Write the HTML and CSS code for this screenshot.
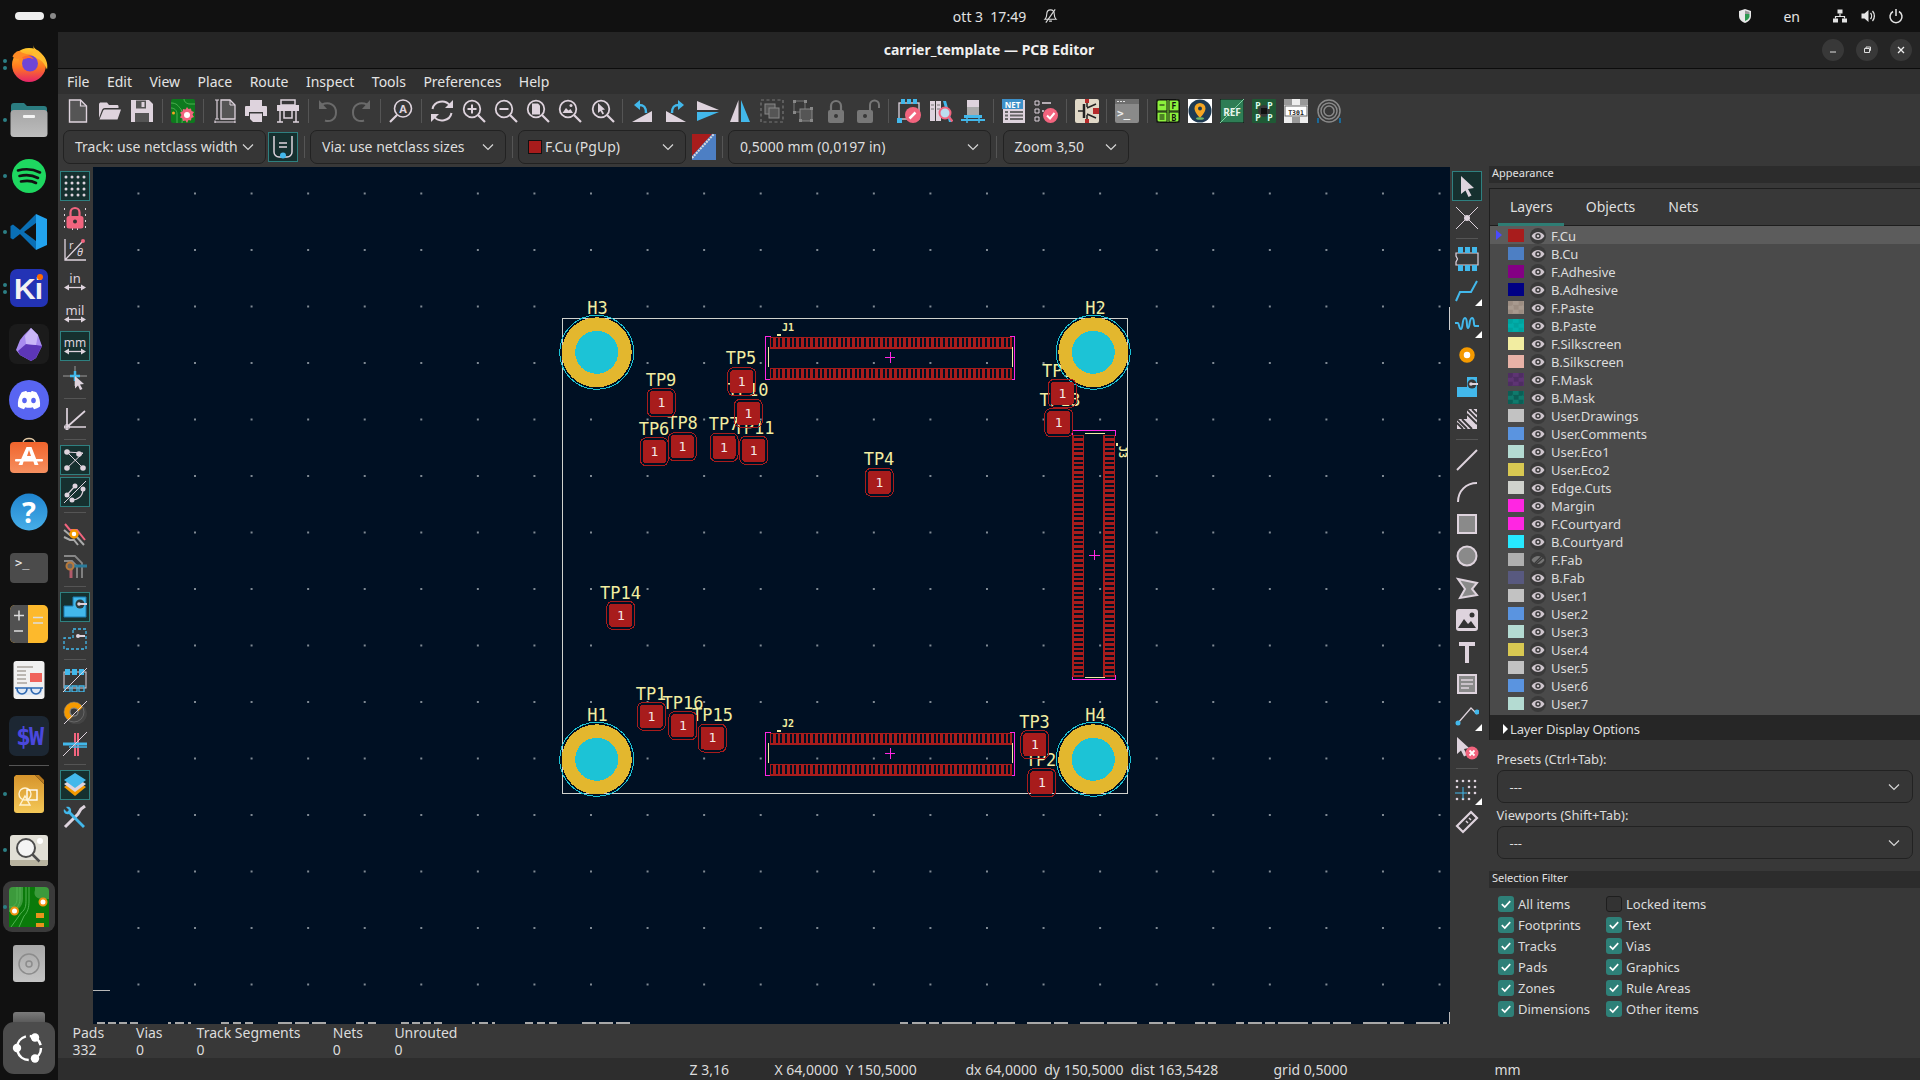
FILE: index.html
```html
<!DOCTYPE html>
<html lang="it">
<head>
<meta charset="utf-8">
<title>carrier_template — PCB Editor</title>
<link rel="stylesheet" href="styles.css">
</head>
<body>
<svg class="defs" width="0" height="0" aria-hidden="true">
  <defs>
    <linearGradient id="gFox" x1="0" y1="0" x2="0" y2="1"><stop offset="0" stop-color="#ffcb2e"/><stop offset=".55" stop-color="#ff7a1f"/><stop offset="1" stop-color="#e5246a"/></linearGradient>
    <linearGradient id="gFiles" x1="0" y1="0" x2="0" y2="1"><stop offset="0" stop-color="#a5a5a5"/><stop offset="1" stop-color="#bdbdbd"/></linearGradient>
    <linearGradient id="gShop" x1="0" y1="0" x2="0" y2="1"><stop offset="0" stop-color="#f0642c"/><stop offset="1" stop-color="#f69060"/></linearGradient>
    <linearGradient id="gHelp" x1="0" y1="0" x2="0" y2="1"><stop offset="0" stop-color="#1f84cf"/><stop offset="1" stop-color="#47aee8"/></linearGradient>
    <linearGradient id="gDraw" x1="0" y1="0" x2="0" y2="1"><stop offset="0" stop-color="#d6942c"/><stop offset="1" stop-color="#f4c857"/></linearGradient>
    <linearGradient id="gDisc" x1="0" y1="0" x2="0" y2="1"><stop offset="0" stop-color="#a8a8a8"/><stop offset="1" stop-color="#c4c4c4"/></linearGradient>
    <linearGradient id="gFade" x1="0" y1="0" x2="0" y2="1"><stop offset="0" stop-color="#7b7b7b"/><stop offset="1" stop-color="#222"/></linearGradient>
    <symbol id="chev" viewBox="0 0 12 8"><path d="M1 1.500l5 5 5-5" fill="none" stroke="#d6d6d6" stroke-width="1.200"/></symbol>
    <symbol id="eye" viewBox="0 0 16 16"><path d="M1.500 8C3.500 5 5.700 4 8 4s4.500 1 6.500 4c-2 3-4.200 4-6.500 4S3.500 11 1.500 8z" fill="#cfc6ce"/><circle cx="8" cy="8" r="2.700" fill="#3a3a3a"/><circle cx="8" cy="8" r="1.300" fill="#cfc6ce"/></symbol>
    <symbol id="eyeoff" viewBox="0 0 16 16"><path d="M1.500 8C3.500 5 5.700 4 8 4s4.500 1 6.500 4c-2 3-4.200 4-6.500 4S3.500 11 1.500 8z" fill="#777"/><path d="M3 13L13 3M5 13L14 5" stroke="#3a3a3a" stroke-width="1.300"/></symbol>
    <symbol id="chk" viewBox="0 0 16 16"><path d="M3.800 8.200l3 2.800 5.400-5.800" fill="none" stroke="#fff" stroke-width="1.700"/></symbol>
    <symbol id="mag" viewBox="0 0 24 24"><circle cx="10" cy="10" r="8.300" fill="none" stroke="#ded3dd" stroke-width="1.800"/><path d="M16 16l7 7" stroke="#ded3dd" stroke-width="2.200"/></symbol>
    <g id="pad"><rect x="-14" y="-14" width="28" height="28" rx="6" fill="none" stroke="#a81c1c"/><rect x="-11.500" y="-11.500" width="23" height="23" rx="3" fill="#a81c1c"/></g>
    <g id="conn">
      <path d="M771 336.500H765.500V379.500H771M1010 336.500H1014.500V379.500H1010" fill="none" stroke="#ff26e2"/>
      <path d="M768.500 347v20M1012.500 347v20" stroke="#f2eda1"/>
      <rect x="769.500" y="336.500" width="242" height="12" fill="#a81c1c"/>
      <rect x="769.500" y="367.500" width="242" height="12" fill="#a81c1c"/>
      <path d="M771 342.500H1010M771 373.500H1010" stroke="#001023" stroke-width="9" stroke-dasharray="2 2.650"/>
      <path d="M885 357.500h10M890 352v11" stroke="#ff26e2"/>
    </g>
  </defs>
</svg>

<header class="topbar">
  <div class="top-left"><span class="pill"></span><span class="pilldot"></span></div>
  <div class="clock">
    <span>ott 3&nbsp;&nbsp;17:49</span>
    <svg class="bell" viewBox="0 0 16 16"><path d="M8 1.500c-2.800 0-4 2-4 4.500 0 3-1 4.500-2 5.500h12c-1-1-2-2.500-2-5.500 0-2.500-1.200-4.500-4-4.500zM6.500 13.500h3" fill="none" stroke="#ddd" stroke-width="1.200"/><path d="M3 15L13 1" stroke="#ddd" stroke-width="1.200"/></svg>
  </div>
  <div class="top-right">
    <svg class="tray shield" viewBox="0 0 16 16"><path d="M8 1l6 2v5c0 3.500-3 6-6 7-3-1-6-3.500-6-7V3z" fill="#e8e8e8"/><path d="M8 6l4.500 0v3c-.6 2-2.500 3.300-4.500 4z" fill="#2d9a50"/><path d="M8 2.500l4.500 1.500v2H8z" fill="#9a9a9a"/></svg>
    <span class="tray en">en</span>
    <svg class="tray" viewBox="0 0 16 16"><path d="M5.500 1.500h5v4h-5zM1 10.500h5v4H1zM10 10.500h5v4h-5z" fill="#e4e4e4"/><path d="M8 5.500v3M3.500 10.500v-2h9v2" fill="none" stroke="#e4e4e4" stroke-width="1.200"/></svg>
    <svg class="tray" viewBox="0 0 16 16"><path d="M1.500 5.500h3L8.500 2v12l-4-3.500h-3z" fill="#e4e4e4"/><path d="M10.500 5c1.400 1.600 1.400 4.400 0 6M12.500 3c2.500 2.800 2.500 7.200 0 10" fill="none" stroke="#e4e4e4" stroke-width="1.300"/></svg>
    <svg class="tray" viewBox="0 0 16 16"><path d="M5 3.500a6 6 0 1 0 6 0" fill="none" stroke="#e4e4e4" stroke-width="1.500"/><path d="M8 1v7" stroke="#e4e4e4" stroke-width="1.500"/></svg>
  </div>
</header>

<div class="main">
  <nav class="dock">
    <div class="dk run2"><svg viewBox="0 1.500 40 40"><circle cx="20" cy="22.500" r="17" fill="url(#gFox)"/><path d="M24 2c1 5 5 6 10 11 4 4 5 10 4 14C34 17 30 17 22 13 25 10 25 6 24 2z" fill="#ffbd2e"/><path d="M3.500 14c3-6 7-6 8-5 3 3 8 2 12 4 3 2 3 7-1 10-4 3-10 2-12-2-1-2-1-3 0-5-3 1-5 0-7-2z" fill="#ff8a24"/><circle cx="21" cy="21" r="8" fill="#6f45d6"/><path d="M13 15c4-3 10-2 12 2-3-2-7-2-10 0z" fill="#ff6a2d"/></svg></div>
    <div class="dk run"><svg viewBox="0 0 40 40"><path d="M2 6c0-2 1-3 3-3h10l3 3h17c2 0 3 1 3 3v6H2z" fill="#2b7c80"/><rect x="1.500" y="10" width="37" height="27" rx="3.500" fill="url(#gFiles)"/><rect x="14" y="15" width="12" height="3" rx="1" fill="#f4f4f4"/></svg></div>
    <div class="dk run"><svg viewBox="0 0 40 40"><circle cx="20" cy="20" r="17" fill="#1ed760"/><path d="M9 14.500c7-2 15-1.500 22 2M10.500 20c6-1.500 13-1 18.500 2M12 25.500c5-1 11-.8 15 1.500" fill="none" stroke="#111" stroke-width="2.600" stroke-linecap="round"/></svg></div>
    <div class="dk run"><svg viewBox="0 0 40 40"><path d="M27 2L11 18 4 12.500 1.500 14v12L4 27.500 11 22l16 16z" fill="#0a6fb5"/><path d="M27 2l11 5v26l-11 5z" fill="#22a3ee"/><path d="M27 11L15 20l12 9z" fill="#111"/></svg></div>
    <div class="dk run2"><svg viewBox="0 0 40 40"><rect x="1" y="1" width="38" height="38" rx="7" fill="#2333b5"/><text x="19" y="31" class="ki">Ki</text><circle cx="31" cy="9" r="3" fill="#ff6a00"/></svg></div>
    <div class="dk"><svg viewBox="0 0 40 40"><rect width="40" height="40" rx="8" fill="#1b1b1b"/><path d="M22 4l7 7 4 11-6 12-5 3-11-6-4-5 4-10 4-5z" fill="#a88bf0"/><path d="M9 27l8-7 10 1 6 1-6 12-5 3-11-6z" fill="#5d36b8"/><path d="M16 12l6-8 7 7-2 10-10-1z" fill="#c9b6f7"/></svg></div>
    <div class="dk"><svg viewBox="0 0 40 40"><circle cx="20" cy="20" r="20" fill="#5865f2"/><path d="M12.500 12.500c2-1 4-1.500 5-1.500l.5 1.200c1.400-.2 2.700-.2 4 0L22.500 11c1 0 3 .5 5 1.500 3 4.500 4 9 3.500 14-2 1.500-4 2.300-6 2.700l-1.200-2c-2.500.7-5 .7-7.600 0l-1.200 2c-2-.4-4-1.200-6-2.700-.5-5 .5-9.500 3.500-14z" fill="#fff"/><ellipse cx="15.500" cy="20.500" rx="2.300" ry="2.700" fill="#5865f2"/><ellipse cx="24.500" cy="20.500" rx="2.300" ry="2.700" fill="#5865f2"/></svg></div>
    <div class="dk"><svg viewBox="0 0 40 40"><path d="M14 7c0-6 12-6 12 0" fill="none" stroke="#e3c9a5" stroke-width="1.400"/><rect x="1" y="6" width="38" height="31" rx="4" fill="url(#gShop)"/><path d="M17.500 11h5l7 18h-4l-1.500-5h-9L13.500 29h-4zM18 20h4l-2-6z" fill="#fff"/><rect x="6" y="23" width="28" height="2.500" rx="1" fill="#fff"/></svg></div>
    <div class="dk"><svg viewBox="0 0 40 40"><circle cx="20" cy="20" r="18.500" fill="url(#gHelp)"/><text x="20" y="31" class="qm">?</text></svg></div>
    <div class="dk"><svg viewBox="0 0 40 40"><rect x="1" y="5" width="38" height="30" rx="4" fill="#4b4b4b"/><text x="6" y="19" class="tm">&gt;_</text></svg></div>
    <div class="dk"><svg viewBox="0 0 40 40"><rect x="1" y="1" width="38" height="38" rx="5" fill="#fdb92c"/><path d="M6 1h13v38H6a5 5 0 0 1-5-5V6a5 5 0 0 1 5-5z" fill="#515151"/><path d="M5 11.500h10M10 6.500v10M5 27h9M24 13.500h10M24 19h10" stroke="#ddd" stroke-width="1.500"/></svg></div>
    <div class="dk"><svg viewBox="0 0 40 40"><rect x="4.500" y="1" width="31" height="38" rx="3" fill="#f1f1f1"/><path d="M8 7h16M8 11h9M8 15h9M8 19h9M8 23h10" stroke="#a9a49d" stroke-width="1.500"/><rect x="21" y="13" width="12" height="9" fill="#f0635b"/><path d="M7 27h26v8H7z" fill="#dfe8f4"/><path d="M6 28h28M8 28c0 8 10 8 10 0M22 28c0 8 10 8 10 0" fill="none" stroke="#2f69b1" stroke-width="1.700"/></svg></div>
    <div class="dk"><svg viewBox="0 0 40 40"><rect width="40" height="40" rx="7" fill="#1c2733"/><text x="20" y="29" class="sw-t">$W</text></svg></div>
    <div class="dsep"></div>
    <div class="dk run"><svg viewBox="0 0 40 40"><path d="M7 1h19l9 9v26a3 3 0 0 1-3 3H8a3 3 0 0 1-3-3V3z" fill="url(#gDraw)"/><path d="M26 1h4l5 5v4z" fill="#b5771d"/><circle cx="16" cy="20" r="6" fill="none" stroke="#fff2d0" stroke-width="1.400"/><rect x="18" y="16" width="10" height="10" fill="none" stroke="#fff" stroke-width="1.400"/><path d="M16 22l5 9H11z" fill="none" stroke="#fff2d0" stroke-width="1.400"/></svg></div>
    <div class="dk run"><svg viewBox="0 0 40 40"><rect x="1" y="5" width="38" height="31" rx="3" fill="#e1dfd6"/><path d="M1 30h38v3a3 3 0 0 1-3 3H4a3 3 0 0 1-3-3z" fill="#b8b39f"/><circle cx="17" cy="18" r="9" fill="#f5f5f5" stroke="#4d4d4d" stroke-width="2"/><path d="M23.500 24.500l7 7" stroke="#4d4d4d" stroke-width="2.500"/><circle cx="31" cy="11" r="3" fill="#fff"/></svg></div>
    <div class="dk active run"><svg viewBox="0 0 40 40"><rect width="40" height="40" rx="4" fill="#3c9a3c"/><path d="M0 40V25C7 25 14 20 14 12V0h12v3c-2 6 2 9 8 9h6v28z" fill="#0a7a0a"/><path d="M8 0v12c0 5-3 8-8 8M11 0v12c0 7-5 12-11 12M17 0v12c0 6 0 10-5 14L2 40M20 0v14c0 6-1 11-5 15l-5 11" fill="none" stroke="#50b050" stroke-width="1"/><rect x="27" y="26" width="8" height="5" fill="#e8931c"/><rect x="27" y="36" width="8" height="4" fill="#e8931c"/><circle cx="34" cy="15" r="3.500" fill="#fff" stroke="#f09312" stroke-width="2"/><circle cx="5.500" cy="24" r="3.500" fill="#fff" stroke="#f09312" stroke-width="2"/></svg></div>
    <div class="dk"><svg viewBox="0 0 40 40"><rect x="4" y="1" width="32" height="37" rx="3" fill="url(#gDisc)"/><circle cx="20" cy="20" r="10" fill="none" stroke="#8c8c8c" stroke-width="1.500"/><circle cx="20" cy="20" r="3" fill="none" stroke="#8c8c8c" stroke-width="1.500"/></svg></div>
    <div class="dk"><svg viewBox="0 0 40 40"><rect x="4" y="12" width="32" height="28" rx="3" fill="url(#gFade)"/></svg></div>
    <div class="ubuntu"><svg viewBox="0 0 40 40"><circle cx="20" cy="20" r="12" fill="none" stroke="#fff" stroke-width="2.500" stroke-dasharray="15 4"/><circle cx="8" cy="20" r="4.200" fill="#fff"/><circle cx="26" cy="9.500" r="4.200" fill="#fff"/><circle cx="26" cy="30.500" r="4.200" fill="#fff"/></svg></div>
  </nav>

  <div class="window">
    <div class="titlebar">
      <span class="title">carrier_template — PCB Editor</span>
      <div class="winbtns">
        <span class="wb"><svg viewBox="0 0 12 12"><path d="M3 8h6" stroke="#ddd" stroke-width="1"/></svg></span>
        <span class="wb"><svg viewBox="0 0 12 12"><path d="M3.500 4.500h5v4h-5zM5 4.500V3h4.500v3.500H8.500" fill="none" stroke="#ddd"/></svg></span>
        <span class="wb"><svg viewBox="0 0 12 12"><path d="M3 3l6 6M9 3l-6 6" stroke="#eee" stroke-width="1.300"/></svg></span>
      </div>
    </div>
    <div class="menubar"><span>File</span><span>Edit</span><span>View</span><span>Place</span><span>Route</span><span>Inspect</span><span>Tools</span><span>Preferences</span><span>Help</span></div>

    <div class="toolbar">
      <span class="tb"><svg class="ic" viewBox="0 0 24 24"><path d="M3.500 1h11l6 6v16h-17z" fill="#555" stroke="#ded3dd" stroke-width="1.400"/><path d="M14.500 1v6h6" fill="none" stroke="#ded3dd" stroke-width="1.200"/></svg></span>
      <span class="tb"><svg class="ic" viewBox="0 0 24 24"><path d="M1 5.500C1 4 2 3.500 3 3.500h6l2 2.500h8c1 0 1.500.5 1.500 1.500V9H7c-1.500 0-2.500.8-3 2l-3 8z" fill="#ded3dd"/><path d="M7 10.500h16l-3.500 10H1.500l3.500-8.500c.4-1 1-1.500 2-1.500z" fill="#ded3dd"/></svg></span>
      <span class="tb"><svg class="ic" viewBox="0 0 24 24"><path d="M1 1h18l4 4v18H1z" fill="#ded3dd"/><rect x="6" y="1.500" width="10" height="8" fill="#545454"/><rect x="11.500" y="3" width="3" height="5" fill="#ded3dd"/><rect x="5" y="14" width="14" height="9" fill="#545454"/></svg></span>
      <span class="sep"></span>
      <span class="tb"><svg class="ic" viewBox="0 0 24 24"><rect width="24" height="24" rx="2" fill="#0e7a1e"/><path d="M0 4c6 0 7 3 9 5s3 6 2 15M0 9c3 0 6 2 6 6v9M13 0c0 3 3 5 6 5h5" fill="none" stroke="#4caf50"/><circle cx="2.500" cy="14" r="1.500" fill="#f5a623"/><path d="M16 8l1.500 2 2.500-.5 .5 2.500 2.500 1-1.500 2.500 1.500 2.500-2.500 1-.5 2.500-2.500-.5L16 24l-1.500-2.500-2.500.5-.5-2.500-2.500-1 1.500-2.500-1.500-2.500 2.500-1 .5-2.500 2.500.5z" fill="#f2647e"/><circle cx="16" cy="16" r="3" fill="#fff"/></svg></span>
      <span class="sep"></span>
      <span class="tb"><svg class="ic" viewBox="0 0 24 24"><path d="M9 1h9l5 5v14H9z" fill="#555" stroke="#ded3dd" stroke-width="1.300"/><path d="M3 1h4M3 20h4M5 1v19M3 23h20M3 21.500v3M23 21.500v3" fill="none" stroke="#ded3dd" stroke-width="1.200"/><path d="M18 1v5h5" fill="none" stroke="#ded3dd"/></svg></span>
      <span class="tb"><svg class="ic" viewBox="0 0 24 24"><rect x="6" y="1" width="12" height="6" fill="#ded3dd"/><path d="M2 7h20a1 1 0 0 1 1 1v9h-4v-4H5v4H1V8a1 1 0 0 1 1-1z" fill="#ded3dd"/><path d="M6 14.500h12V23H9l-3-3z" fill="#ded3dd"/></svg></span>
      <span class="tb"><svg class="ic" viewBox="0 0 24 24"><path d="M5 1h14v5H5z" fill="none" stroke="#ded3dd" stroke-width="1.500"/><rect x="1" y="6" width="22" height="6" fill="#ded3dd"/><path d="M4 12v11M20 12v11M1 23h6M17 23h6M8 12v7h8v-7" fill="none" stroke="#ded3dd" stroke-width="1.500"/></svg></span>
      <span class="sep"></span>
      <span class="tb"><svg class="ic" viewBox="0 0 24 24"><path d="M6 5.500c7-3 14 0 14 8s-7 9.500-11 8" fill="none" stroke="#6a6a6a" stroke-width="2"/><path d="M3 1v9h8z" fill="#6a6a6a"/></svg></span>
      <span class="tb"><svg class="ic" viewBox="0 0 24 24"><path d="M18 5.500c-7-3-14 0-14 8s7 9.500 11 8" fill="none" stroke="#6a6a6a" stroke-width="2"/><path d="M21 1v9h-8z" fill="#6a6a6a"/></svg></span>
      <span class="sep"></span>
      <span class="tb"><svg class="ic" viewBox="0 0 24 24"><circle cx="14" cy="9.500" r="8.500" fill="none" stroke="#ded3dd" stroke-width="1.600"/><path d="M8 16l-7 7" stroke="#ded3dd" stroke-width="2.200"/><text x="14" y="14" class="ictxt">A</text></svg></span>
      <span class="sep"></span>
      <span class="tb"><svg class="ic" viewBox="0 0 24 24"><path d="M2.500 10C4 2 15 0 20 6.500M21.500 14C20 22 9 24 4 17.500" fill="none" stroke="#ded3dd" stroke-width="2"/><path d="M23 1v8h-8zM1 23v-8h8z" fill="#ded3dd"/></svg></span>
      <span class="tb"><svg class="ic" viewBox="0 0 24 24"><use href="#mag"/><path d="M5.500 10h9M10 5.500v9" stroke="#ded3dd" stroke-width="2"/></svg></span>
      <span class="tb"><svg class="ic" viewBox="0 0 24 24"><use href="#mag"/><path d="M5.500 10h9" stroke="#ded3dd" stroke-width="2"/></svg></span>
      <span class="tb"><svg class="ic" viewBox="0 0 24 24"><use href="#mag"/><path d="M6 4.500h6l2 2v9H6z" fill="#ded3dd"/></svg></span>
      <span class="tb"><svg class="ic" viewBox="0 0 24 24"><use href="#mag"/><path d="M4.500 14l3.500-5 2.500 2.500 2-1.500 2.500 4z" fill="#ded3dd"/><circle cx="13" cy="6.500" r="1.500" fill="#ded3dd"/></svg></span>
      <span class="tb"><svg class="ic" viewBox="0 0 24 24"><use href="#mag"/><path d="M7 4l7 6.500-3 .5 2 3.500-1.500 1-2-3.500-2.500 2z" fill="#ded3dd"/></svg></span>
      <span class="sep"></span>
      <span class="tb"><svg class="ic" viewBox="0 0 24 24"><path d="M1 23L21 23V12z" fill="#ded3dd"/><path d="M15 14C15 8 13 6 8 6" fill="none" stroke="#42b8eb" stroke-width="2.500"/><path d="M9 1L3 6l6 5z" fill="#42b8eb"/></svg></span>
      <span class="tb"><svg class="ic" viewBox="0 0 24 24"><path d="M23 23L3 23V12z" fill="#ded3dd"/><path d="M9 14C9 8 11 6 16 6" fill="none" stroke="#42b8eb" stroke-width="2.500"/><path d="M15 1l6 5-6 5z" fill="#42b8eb"/></svg></span>
      <span class="tb"><svg class="ic" viewBox="0 0 24 24"><path d="M1 2l22 9H1z" fill="#ded3dd"/><path d="M1 13h22L1 22z" fill="#42b8eb"/></svg></span>
      <span class="tb"><svg class="ic" viewBox="0 0 24 24"><path d="M10.500 1v22H2z" fill="#ded3dd"/><path d="M13 1v22h9z" fill="#42b8eb"/></svg></span>
      <span class="tb"><svg class="ic" viewBox="0 0 24 24"><rect x="1" y="1" width="22" height="22" fill="none" stroke="#777" stroke-width="1.200" stroke-dasharray="3 2.500"/><rect x="5" y="5" width="10" height="10" fill="#555" stroke="#888"/><rect x="9" y="9" width="10" height="10" fill="#555" stroke="#888"/></svg></span>
      <span class="tb"><svg class="ic" viewBox="0 0 24 24"><path d="M2 2h11v11H2z" fill="none" stroke="#777"/><rect x="8" y="10" width="12" height="12" fill="#555" stroke="#888"/><path d="M1 1h3v3H1zM12 1h3v3h-3zM1 12h3v3H1zM18 8h3v3h-3zM18 20h3v3h-3zM7 20h3v3H7z" fill="#888"/></svg></span>
      <span class="tb"><svg class="ic" viewBox="0 0 24 24"><path d="M7 12V7a5 5 0 0 1 10 0v5" fill="none" stroke="#777" stroke-width="2.200"/><rect x="4" y="11" width="16" height="13" rx="2" fill="#777"/><circle cx="12" cy="17" r="2" fill="#383838"/></svg></span>
      <span class="tb"><svg class="ic" viewBox="0 0 24 24"><path d="M14 12V6a4.500 4.500 0 0 1 9 0v3" fill="none" stroke="#777" stroke-width="2"/><rect x="1" y="11" width="16" height="13" rx="2" fill="#777"/><circle cx="9" cy="17" r="2" fill="#383838"/></svg></span>
      <span class="sep"></span>
      <span class="tb"><svg class="ic" viewBox="0 0 24 24"><rect x="2" y="4" width="20" height="16" fill="none" stroke="#ded3dd" stroke-width="1.300"/><path d="M4 0h4v5H4zM10 0h4v5h-4zM16 0h4v5h-4zM0 19h5v5H0z" fill="#42b8eb"/><circle cx="16" cy="16" r="8" fill="#f2647e"/><path d="M12.500 19.500l6-6" stroke="#fff" stroke-width="2.500"/></svg></span>
      <span class="tb"><svg class="ic" viewBox="0 0 24 24"><path d="M1 2h5v20H1zM7 2h5v20H7z" fill="#ded3dd"/><path d="M2 6h3M2 10h3M8 6h3M8 10h3" stroke="#777"/><path d="M14 2h3l6 21h-3z" fill="#42b8eb"/><circle cx="16" cy="14" r="5.500" fill="#bde" stroke="#f2647e" stroke-width="2"/><path d="M20 18l3.500 4.500" stroke="#f2647e" stroke-width="2.200"/></svg></span>
      <span class="tb"><svg class="ic" viewBox="0 0 24 24"><path d="M6 1h12v15H6z" fill="#ded3dd"/><rect x="6" y="8" width="12" height="8" fill="#aaa"/><rect x="3" y="16" width="18" height="3" fill="#42b8eb"/><path d="M0 21h24" stroke="#42b8eb" stroke-width="2"/><path d="M6 19v5M18 19v5" stroke="#42b8eb" stroke-width="1.500"/></svg></span>
      <span class="sep"></span>
      <span class="tb"><svg class="ic" viewBox="0 0 24 24"><path d="M1 1h22v23H1z" fill="#ded3dd"/><rect x="0" y="0" width="21" height="10" fill="#3d90c9"/><text x="10.500" y="8.500" class="nettxt">NET</text><path d="M3 13h3M8 13h13M3 16.500h3M8 16.500h13M3 20h3M8 20h13" stroke="#666" stroke-width="2"/></svg></span>
      <span class="tb"><svg class="ic" viewBox="0 0 24 24"><path d="M1 2h4v4H1zM1 10h4v4H1zM1 18h4v4H1z" fill="none" stroke="#ded3dd"/><path d="M8 4h9M8 12h2" stroke="#ded3dd" stroke-width="1.400"/><circle cx="16.500" cy="16.500" r="7.500" fill="#f2647e"/><path d="M13 16.500l3 3 4.500-5.500" fill="none" stroke="#fff" stroke-width="2"/></svg></span>
      <span class="sep"></span>
      <span class="tb"><svg class="ic" viewBox="0 0 24 24"><rect width="24" height="24" rx="2" fill="#e0d8c7"/><path d="M12 0v8M12 16v8M12 9l9-4M12 15l9 4M3 12h6" stroke="#222" stroke-width="1.500"/><path d="M9 5v14" stroke="#222" stroke-width="2.500"/><path d="M10 0h4v4h-4zM10 20h4v4h-4zM18 9h6v6h-6z" fill="#b52a2a"/></svg></span>
      <span class="sep"></span>
      <span class="tb"><svg class="ic" viewBox="0 0 24 24"><rect width="24" height="24" rx="2" fill="#8a8a8a"/><rect width="24" height="5" fill="#6e6e6e"/><path d="M2 2.500h2M5 2.500h2M8 2.500h2" stroke="#ddd"/><text x="2" y="18" class="prompt">&gt;_</text></svg></span>
      <span class="sep"></span>
      <span class="tb"><svg class="ic" viewBox="0 0 24 24"><rect x=".5" y=".5" width="23" height="23" rx="3" fill="#8cf23c" stroke="#111"/><rect x="1" y="1" width="10" height="11" fill="none" stroke="#111"/><rect x="1" y="13" width="10" height="10" fill="none" stroke="#111"/><rect x="13" y="1" width="10" height="11" fill="none" stroke="#111"/><rect x="13" y="13" width="10" height="10" fill="none" stroke="#111"/><text x="18" y="10" class="fb">F</text><text x="18" y="21.500" class="fb">B</text><path d="M3.500 6h5M3.500 16h5M3.500 18h5M3.500 20h5" stroke="#111"/></svg></span>
      <span class="tb"><svg class="ic" viewBox="0 0 24 24"><rect width="24" height="24" fill="#fff"/><circle cx="12" cy="12" r="11.500" fill="#1e3a52"/><path d="M12 4a5.500 5.500 0 0 1 5.500 5.500c0 4-5.500 9.500-5.500 9.500S6.500 13.500 6.500 9.500A5.500 5.500 0 0 1 12 4z" fill="#f5a623"/><circle cx="12" cy="9.500" r="2" fill="#1e3a52"/><ellipse cx="12" cy="19.500" rx="4" ry="1.300" fill="#6bb56b"/></svg></span>
      <span class="tb"><svg class="ic" viewBox="0 0 24 24"><rect width="24" height="24" rx="1" fill="#2e7d55" stroke="#111"/><path d="M0 24L24 0" stroke="#7fd0a0"/><text x="12" y="17" class="ref">REF</text></svg></span>
      <span class="tb"><svg class="ic" viewBox="0 0 24 24"><rect width="24" height="24" rx="1" fill="#1f5a35"/><circle cx="12" cy="12" r="6" fill="#383838"/><rect x="9" y="9" width="6" height="6" fill="#111"/><text x="6" y="10" class="pp">P</text><text x="18" y="10" class="pp">P</text><text x="6" y="22" class="pp">P</text><text x="18" y="22" class="pp">P</text></svg></span>
      <span class="tb"><svg class="ic" viewBox="0 0 24 24"><rect width="24" height="24" fill="#eee"/><rect x="0" y="0" width="8" height="6" fill="#999"/><rect x="16" y="0" width="8" height="6" fill="#999"/><rect x="8" y="18" width="8" height="6" fill="#999"/><rect x="1" y="7" width="22" height="10" fill="#fff" stroke="#666"/><text x="12" y="15.500" class="t301">T301</text></svg></span>
      <span class="tb"><svg class="ic" viewBox="0 0 24 24"><circle cx="12" cy="12" r="11" fill="none" stroke="#8a8a8a" stroke-width="1.500"/><circle cx="12" cy="12" r="8" fill="none" stroke="#8a8a8a" stroke-width="1.500"/><circle cx="12" cy="12" r="5" fill="none" stroke="#8a8a8a" stroke-width="1.500"/><path d="M1 19v5M23 19v5" stroke="#1a6a9a" stroke-width="2"/></svg></span>
    </div>

    <div class="auxbar">
      <div class="combo c-track"><span>Track: use netclass width</span><svg class="cv"><use href="#chev"/></svg></div>
      <span class="toggle"><svg class="ic" viewBox="0 0 24 24"><path d="M3 1v16a5 5 0 0 0 5 5h8a5 5 0 0 0 5-5V1" fill="none" stroke="#ded3dd" stroke-width="1.500"/><path d="M8 8h8M8 12h8" stroke="#ded3dd" stroke-width="1.300"/><circle cx="12" cy="20.500" r="3" fill="#42b8eb"/></svg></span>
      <span class="asep"></span>
      <div class="combo c-via"><span>Via: use netclass sizes</span><svg class="cv"><use href="#chev"/></svg></div>
      <span class="asep"></span>
      <div class="combo c-layer"><span class="layerval"><i class="lsw"></i>F.Cu (PgUp)</span><svg class="cv"><use href="#chev"/></svg></div>
      <span class="pair"><svg viewBox="0 0 24 26"><path d="M0 0h24v26H0z" fill="#4d7fc4"/><path d="M0 0h20L0 22z" fill="#a81c1c"/><path d="M0 24L22 0" stroke="#ddd" stroke-width="2" stroke-dasharray="2 1"/></svg></span>
      <span class="asep"></span>
      <div class="combo c-grid"><span>0,5000 mm (0,0197 in)</span><svg class="cv"><use href="#chev"/></svg></div>
      <span class="asep"></span>
      <div class="combo c-zoom"><span>Zoom 3,50</span><svg class="cv"><use href="#chev"/></svg></div>
    </div>

    <div class="workspace">
      <div class="centre">
        <div class="editrow">
          <div class="vtools">
            <span class="vb on"><svg class="ic" viewBox="0 0 24 24" fill="#ded3dd"><circle cx="3" cy="3" r="1.500"/><circle cx="9" cy="3" r="1.500"/><circle cx="15" cy="3" r="1.500"/><circle cx="21" cy="3" r="1.500"/><circle cx="3" cy="9" r="1.500"/><circle cx="9" cy="9" r="1.500"/><circle cx="15" cy="9" r="1.500"/><circle cx="21" cy="9" r="1.500"/><circle cx="3" cy="15" r="1.500"/><circle cx="9" cy="15" r="1.500"/><circle cx="15" cy="15" r="1.500"/><circle cx="21" cy="15" r="1.500"/><circle cx="3" cy="21" r="1.500"/><circle cx="9" cy="21" r="1.500"/><circle cx="15" cy="21" r="1.500"/><circle cx="21" cy="21" r="1.500"/></svg></span>
            <span class="vb"><svg class="ic" viewBox="0 0 24 24"><path d="M1 3h1M1 9h1M1 15h1M1 21h1M22 3h1M22 9h1M22 15h1M22 21h1M9 23h1M14 23h1" stroke="#ded3dd" stroke-width="2"/><path d="M7.500 11V6.500a4.500 4.500 0 0 1 9 0V11" fill="none" stroke="#f2647e" stroke-width="2.200"/><rect x="3.500" y="10" width="17" height="12.500" rx="2.500" fill="#f2647e"/><circle cx="12" cy="15.500" r="2" fill="#333"/></svg></span>
            <span class="vb"><svg class="ic" viewBox="0 0 24 24"><path d="M2 1v21h21M2 22L20 3" fill="none" stroke="#ded3dd" stroke-width="1.300"/><circle cx="20" cy="3" r="2" fill="#f2647e"/><text x="6" y="11" class="polar">r</text><text x="14" y="18" class="polar it">θ</text></svg></span>
            <span class="vb"><svg class="ic" viewBox="0 0 24 24"><text x="12" y="13" class="unit">in</text><path d="M3 17.500h18" stroke="#ded3dd" stroke-width="1.300"/><path d="M1 17.500l5-3v6zM23 17.500l-5-3v6z" fill="#ded3dd"/></svg></span>
            <span class="vb"><svg class="ic" viewBox="0 0 24 24"><text x="12" y="13" class="unit">mil</text><path d="M3 17.500h18" stroke="#ded3dd" stroke-width="1.300"/><path d="M1 17.500l5-3v6zM23 17.500l-5-3v6z" fill="#ded3dd"/></svg></span>
            <span class="vb on"><svg class="ic" viewBox="0 0 24 24"><text x="12" y="13" class="unit u-mm">mm</text><path d="M3 17.500h18" stroke="#ded3dd" stroke-width="1.300"/><path d="M1 17.500l5-3v6zM23 17.500l-5-3v6z" fill="#ded3dd"/></svg></span>
            <span class="vb"><svg class="ic" viewBox="0 0 24 24"><path d="M0 10h24M12 0v20" stroke="#999"/><path d="M7 10h10M12 5v10" stroke="#42b8eb" stroke-width="2.500"/><path d="M12 10l9 8-4 .5 2.500 4.500-2.500 1-2-4.500-3 3z" fill="#ded3dd"/></svg></span>
            <span class="vs"></span>
            <span class="vb"><svg class="ic" viewBox="0 0 24 24"><path d="M4 1v22M1 20h22M4 20L22 4" fill="none" stroke="#ded3dd" stroke-width="1.700"/><circle cx="4" cy="20" r="2.500" fill="none" stroke="#ded3dd"/></svg></span>
            <span class="vs"></span>
            <span class="vb on"><svg class="ic" viewBox="0 0 24 24"><path d="M4 4l16 16M20 5L4 20M4 4l16 1" stroke="#ded3dd"/><circle cx="4" cy="4" r="2.800" fill="#ded3dd"/><circle cx="16" cy="6" r="2.800" fill="#ded3dd"/><circle cx="4" cy="20" r="2.800" fill="#ded3dd"/><circle cx="20" cy="20" r="2.800" fill="#ded3dd"/></svg></span>
            <span class="vb on"><svg class="ic" viewBox="0 0 24 24"><path d="M1 23L23 1" stroke="#ded3dd"/><path d="M4 15l8-9M9 20c6 0 11-4 11-11" fill="none" stroke="#ded3dd" stroke-width="1.200"/><circle cx="4" cy="15" r="2.500" fill="#ded3dd"/><circle cx="12" cy="6" r="2.500" fill="#ded3dd"/><circle cx="9" cy="20" r="2.500" fill="#ded3dd"/><circle cx="20" cy="9" r="2.500" fill="#ded3dd"/></svg></span>
            <span class="vs"></span>
            <span class="vb"><svg class="ic" viewBox="0 0 24 24"><path d="M2 2l5 6h7l8 10" fill="none" stroke="#f2647e" stroke-width="2"/><path d="M1 8l6 5 6 1 8 9M1 15l6 3 4 0 4 5" fill="none" stroke="#aaa" stroke-width="2"/><circle cx="11" cy="12" r="3.500" fill="#fff" stroke="#f59a00" stroke-width="2.500"/></svg></span>
            <span class="vb"><svg class="ic" viewBox="0 0 24 24"><path d="M1 2h11l7 7v15M1 7h8l5 5v12M19 24" fill="none" stroke="#888" stroke-width="1.800"/><path d="M8 13v11" stroke="#b05a6a" stroke-width="3"/><path d="M8 12h16" stroke="#2a7a9a" stroke-width="3"/><circle cx="7" cy="12" r="3.500" fill="#666" stroke="#b8793a" stroke-width="2"/></svg></span>
            <span class="vs"></span>
            <span class="vb on"><svg class="ic" viewBox="0 0 24 24"><path d="M10 2h13v20H1V11h9z" fill="#42b8eb" stroke="#1a7ab0"/><circle cx="17" cy="9" r="4.500" fill="#2c3a3a"/><path d="M16 9h8" stroke="#ded3dd" stroke-width="2"/><circle cx="16" cy="9" r="1.800" fill="#ded3dd"/></svg></span>
            <span class="vb"><svg class="ic" viewBox="0 0 24 24"><path d="M10 2h13v20H1V11h9z" fill="none" stroke="#42b8eb" stroke-width="1.300" stroke-dasharray="3 2"/><path d="M15 9h7" stroke="#ded3dd" stroke-width="2"/><circle cx="15" cy="9" r="2" fill="#ded3dd"/></svg></span>
            <span class="vs"></span>
            <span class="vb"><svg class="ic" viewBox="0 0 24 24"><rect x="1" y="4" width="22" height="16" fill="none" stroke="#ded3dd"/><path d="M2 1h5v6H2zM9 1h5v6H9zM16 1h5v6h-5z" fill="#42b8eb"/><path d="M2 18h5v6H2zM9 18h5v6H9zM16 18h5v6h-5z" fill="none" stroke="#42b8eb" stroke-width="1.300"/><path d="M0 24L24 0" stroke="#ded3dd"/></svg></span>
            <span class="vb"><svg class="ic" viewBox="0 0 24 24"><circle cx="11" cy="12" r="10" fill="#f59a00"/><path d="M21 6A10 10 0 0 1 5 21z" fill="#444"/><circle cx="11" cy="12" r="4" fill="#383838" stroke="#888" stroke-width="1.200"/><circle cx="11" cy="12" r="10" fill="none" stroke="#888" stroke-width=".5"/><path d="M1 24L24 1" stroke="#ded3dd"/></svg></span>
            <span class="vb"><svg class="ic" viewBox="0 0 24 24"><path d="M12 1v23M15 1v23" stroke="#f2647e" stroke-width="2"/><path d="M0 12h24" stroke="#42b8eb" stroke-width="3"/><path d="M6 15h18" stroke="#42b8eb" stroke-width="1.500"/><path d="M0 24L24 0" stroke="#ded3dd"/></svg></span>
            <span class="vs"></span>
            <span class="vb on"><svg class="ic" viewBox="0 0 24 24"><path d="M12 7l11 7-11 9L1 14z" fill="#f59a00"/><path d="M12 4l11 7-11 8L1 11z" fill="#ded3dd"/><path d="M12 0l11 7-11 8L1 7z" fill="#42b8eb"/></svg></span>
            <span class="vb"><svg class="ic" viewBox="0 0 24 24"><path d="M22 1l-4 3-3 5L2 22" stroke="#ded3dd" stroke-width="3" fill="none"/><path d="M3 2c3-1 6 1 5 5l14 14-2 2L6 9C2 10 0 7 1 4l3 3 2-2z" fill="#42b8eb"/></svg></span>
          </div>

          <svg class="canvas" viewBox="93 167 1357 857">
            <defs>
              <pattern id="grid" x="0" y="0" width="56.570" height="56.500" patternUnits="userSpaceOnUse" patternTransform="translate(590 305.500)"><rect width="1.500" height="1.500" fill="#808a94"/></pattern>
            </defs>
            <rect x="93" y="167" width="1357" height="857" fill="#001023"/>
            <rect x="93" y="167" width="1357" height="857" fill="url(#grid)"/>
            <path d="M93 990.500h17M1449.500 1012v12" stroke="#b8b8b8"/>
            <path d="M97 1023H650" stroke="#a8a8a8" stroke-width="2" stroke-dasharray="8 3 8 3 8 3 8 30 3 4 9 4 3 30 8 4 8 4 8 25 14 3 14 3 14 30 8 4 8 25"/>
            <path d="M900 1023H1447" stroke="#a8a8a8" stroke-width="2" stroke-dasharray="8 4 14 3 10 3 30 4 18 3 18 12 24 3 14 12 24 3 30 12 14 4 8 20 10 3 8 20"/>
            <rect x="562.500" y="318.500" width="565" height="475" fill="none" stroke="#d0d2cd"/>

            <g class="silk">
              <text x="741" y="364">TP5</text><text x="748" y="395.500">TP10</text><text x="661" y="385.500">TP9</text>
              <text x="654" y="434.500">TP6</text><text x="682.500" y="428.500">TP8</text><text x="724" y="430">TP7</text>
              <text x="754" y="434">TP11</text><text x="879" y="465">TP4</text><text x="1062.500" y="376.500">TP12</text>
              <text x="1060" y="405.500">TP13</text><text x="651" y="700">TP1</text><text x="683" y="709">TP16</text>
              <text x="712.500" y="720.500">TP15</text><text x="1034.500" y="728">TP3</text><text x="1041" y="766">TP2</text><text x="620.500" y="599">TP14</text>
            </g>

            <use href="#conn"/>
            <use href="#conn" y="396.300"/>
            <use href="#conn" transform="translate(1094 555.300) rotate(90) translate(-890 -357.800)"/>
            <g class="silk small">
              <text x="788" y="331">J1</text><text x="788" y="727">J2</text>
              <text transform="translate(1119 452) rotate(90)">J3</text>
            </g>
            <path d="M777 334.500h4M777 730.500h4M1117 446v-3" stroke="#f2eda1" stroke-width="2"/>

            <g>
              <circle cx="596.700" cy="352.300" r="37" fill="none" stroke="#1cc3d6"/><circle cx="596.700" cy="352.300" r="35" fill="#e3b72e"/><circle cx="596.700" cy="352.300" r="21.500" fill="#1cc3d6"/>
              <circle cx="1093.300" cy="352.300" r="37" fill="none" stroke="#1cc3d6"/><circle cx="1093.300" cy="352.300" r="35" fill="#e3b72e"/><circle cx="1093.300" cy="352.300" r="21.500" fill="#1cc3d6"/>
              <circle cx="596.700" cy="759.300" r="37" fill="none" stroke="#1cc3d6"/><circle cx="596.700" cy="759.300" r="35" fill="#e3b72e"/><circle cx="596.700" cy="759.300" r="21.500" fill="#1cc3d6"/>
              <circle cx="1093.300" cy="759.300" r="37" fill="none" stroke="#1cc3d6"/><circle cx="1093.300" cy="759.300" r="35" fill="#e3b72e"/><circle cx="1093.300" cy="759.300" r="21.500" fill="#1cc3d6"/>
            </g>
            <g class="silk">
              <text x="597.500" y="313.500">H3</text><text x="1095.500" y="313.500">H2</text><text x="597.500" y="721">H1</text><text x="1095.500" y="721">H4</text>
            </g>

            <use href="#pad" x="741.700" y="381.700"/><use href="#pad" x="748.300" y="413.300"/><use href="#pad" x="661.300" y="402.700"/>
            <use href="#pad" x="654.300" y="451.700"/><use href="#pad" x="682.300" y="446.700"/><use href="#pad" x="724" y="447.300"/>
            <use href="#pad" x="753.700" y="450.300"/><use href="#pad" x="879.300" y="482.300"/><use href="#pad" x="1062.300" y="393.300"/>
            <use href="#pad" x="1058.700" y="422.700"/><use href="#pad" x="651.400" y="716.300"/><use href="#pad" x="682.800" y="725.700"/>
            <use href="#pad" x="712.300" y="738"/><use href="#pad" x="1034.900" y="744.700"/><use href="#pad" x="1041.800" y="782.700"/><use href="#pad" x="620.800" y="615.300"/>
            <g class="padnum">
              <text x="741.700" y="386">1</text><text x="748.300" y="417.500">1</text><text x="661.300" y="407">1</text>
              <text x="654.300" y="456">1</text><text x="682.300" y="451">1</text><text x="724" y="451.500">1</text>
              <text x="753.700" y="454.500">1</text><text x="879.300" y="486.500">1</text><text x="1062.300" y="397.500">1</text>
              <text x="1058.700" y="427">1</text><text x="651.400" y="720.500">1</text><text x="682.800" y="730">1</text>
              <text x="712.300" y="742">1</text><text x="1034.900" y="749">1</text><text x="1041.800" y="787">1</text><text x="620.800" y="619.500">1</text>
            </g>
            <path d="M1449.500 307v23" stroke="#cfcfcf"/>
          </svg>

          <div class="vtools rt">
            <span class="vb on"><svg class="ic" viewBox="0 0 24 24"><path d="M6 2l13 12-6 1 3.500 6.500-3 1.500-3-6.500L6 20z" fill="#ded3dd"/></svg></span>
            <span class="vb"><svg class="ic" viewBox="0 0 24 24"><path d="M1 1l22 22M23 1L1 23" stroke="#ded3dd"/><circle cx="12" cy="12" r="3" fill="#ded3dd"/></svg></span>
            <span class="vs"></span>
            <span class="vb"><svg class="ic" viewBox="0 0 24 24"><path d="M1 6h22v12H1v-3l1.500-3L1 9z" fill="none" stroke="#ded3dd" stroke-width="1.200"/><path d="M3 0h5v6H3zM10 0h5v6h-5zM17 0h5v6h-5zM3 18h5v6H3zM10 18h5v6h-5zM17 18h5v6h-5z" fill="#42b8eb"/></svg></span>
            <span class="vb"><svg class="ic tri" viewBox="0 0 24 24"><path d="M1 22l4-9h11l6-11" fill="none" stroke="#42b8eb" stroke-width="2"/></svg></span>
            <span class="vb"><svg class="ic tri" viewBox="0 0 24 24"><path d="M0 12h3c1 0 1 6 3 6s1-11 4-11 1 10 3 10 1-10 4-10 1 8 3 8h4" fill="none" stroke="#42b8eb" stroke-width="2"/></svg></span>
            <span class="vb"><svg class="ic" viewBox="0 0 24 24"><circle cx="12" cy="12" r="5.500" fill="#fff" stroke="#f59a00" stroke-width="4.500"/></svg></span>
            <span class="vb"><svg class="ic" viewBox="0 0 24 24"><path d="M12 2h10v20H2V12h10z" fill="#42b8eb"/><circle cx="17" cy="9" r="4.500" fill="#383838"/><path d="M16 9h7" stroke="#ded3dd" stroke-width="2"/><circle cx="16" cy="9" r="1.800" fill="#ded3dd"/></svg></span>
            <span class="vb"><svg class="ic hatch" viewBox="0 0 24 24"><path d="M12 2h10v20H2V12h10z" fill="#ded3dd"/><path d="M2 16l6 6M2 12l10 10M7 12l10 10M12 7l10 10M12 2l10 10M17 2l5 5" stroke="#383838" stroke-width="1.800"/></svg></span>
            <span class="vs"></span>
            <span class="vb"><svg class="ic" viewBox="0 0 24 24"><path d="M2 22L22 2" stroke="#ded3dd" stroke-width="2"/></svg></span>
            <span class="vb"><svg class="ic" viewBox="0 0 24 24"><path d="M3 22C3 11 11 3 22 3" fill="none" stroke="#ded3dd" stroke-width="2"/></svg></span>
            <span class="vb"><svg class="ic" viewBox="0 0 24 24"><rect x="3" y="3" width="18" height="18" fill="#8a8a8a" stroke="#ded3dd" stroke-width="2"/></svg></span>
            <span class="vb"><svg class="ic" viewBox="0 0 24 24"><circle cx="12" cy="12" r="9.500" fill="#8a8a8a" stroke="#ded3dd" stroke-width="2"/></svg></span>
            <span class="vb"><svg class="ic" viewBox="0 0 24 24"><path d="M3 3l19 4-5 6 5 6-17 3 5-9z" fill="#8a8a8a" stroke="#ded3dd" stroke-width="2"/></svg></span>
            <span class="vb"><svg class="ic" viewBox="0 0 24 24"><rect x="1" y="1" width="22" height="22" rx="3" fill="#ded3dd"/><path d="M3 20l6-9 4 5 3-3 5 7z" fill="#333"/><circle cx="17" cy="7" r="2.500" fill="#333"/></svg></span>
            <span class="vb"><svg class="ic" viewBox="0 0 24 24"><path d="M4 2h16v4H14v17h-4V6H4z" fill="#ded3dd"/></svg></span>
            <span class="vb"><svg class="ic" viewBox="0 0 24 24"><rect x="3" y="3" width="18" height="18" fill="#8a8a8a" stroke="#ded3dd" stroke-width="2"/><path d="M6 8h12M6 12h12M6 16h8" stroke="#ded3dd" stroke-width="1.500"/></svg></span>
            <span class="vb"><svg class="ic tri" viewBox="0 0 24 24"><path d="M3 19L16 4l6 6" fill="none" stroke="#ded3dd" stroke-width="1.200"/><circle cx="3" cy="19" r="2.500" fill="#42b8eb"/><circle cx="22" cy="8" r="2.500" fill="#42b8eb"/></svg></span>
            <span class="vb"><svg class="ic" viewBox="0 0 24 24"><path d="M2 1l12 11-5 1 3 6-3 1.500-3-6L2 18z" fill="#ded3dd"/><circle cx="17" cy="17" r="6.500" fill="#f2647e"/><path d="M14.500 14.500l5 5M19.500 14.500l-5 5" stroke="#fff" stroke-width="1.800"/></svg></span>
            <span class="vs"></span>
            <span class="vb"><svg class="ic tri" viewBox="0 0 24 24" fill="#ded3dd"><circle cx="2" cy="3" r="1.300"/><circle cx="8" cy="3" r="1.300"/><circle cx="14" cy="3" r="1.300"/><circle cx="20" cy="3" r="1.300"/><circle cx="2" cy="9" r="1.300"/><circle cx="14" cy="9" r="1.300"/><circle cx="20" cy="9" r="1.300"/><circle cx="14" cy="15" r="1.300"/><circle cx="20" cy="15" r="1.300"/><circle cx="2" cy="21" r="1.300"/><circle cx="8" cy="21" r="1.300"/><circle cx="14" cy="21" r="1.300"/><path d="M0 15h12M8 9v12" stroke="#42b8eb"/></svg></span>
            <span class="vb"><svg class="ic" viewBox="0 0 24 24"><path d="M16 2l6 6L8 22l-6-6z" fill="none" stroke="#ded3dd" stroke-width="2.200"/><path d="M11 11l2 2M14 8l2 2" stroke="#ded3dd" stroke-width="1.500"/></svg></span>
          </div>
        </div>

        <div class="msgpanel">
          <div class="col c1"><span>Pads</span><span>332</span></div>
          <div class="col c2"><span>Vias</span><span>0</span></div>
          <div class="col c3"><span>Track Segments</span><span>0</span></div>
          <div class="col c4"><span>Nets</span><span>0</span></div>
          <div class="col c5"><span>Unrouted</span><span>0</span></div>
        </div>
      </div>

      <aside class="panel">
        <div class="dockhead">Appearance</div>
        <div class="notebook">
          <div class="tabs"><span class="tab cur">Layers</span><span class="tab t2">Objects</span><span class="tab t3">Nets</span></div>
          <div class="layers">
            <div class="row sel"><i class="arrow"></i><i class="sw l-cu"></i><span class="eye"><svg><use href="#eye"/></svg></span><span>F.Cu</span></div>
            <div class="row"><i class="sw l-bcu"></i><span class="eye"><svg><use href="#eye"/></svg></span><span>B.Cu</span></div>
            <div class="row"><i class="sw l-fad"></i><span class="eye"><svg><use href="#eye"/></svg></span><span>F.Adhesive</span></div>
            <div class="row"><i class="sw l-bad"></i><span class="eye"><svg><use href="#eye"/></svg></span><span>B.Adhesive</span></div>
            <div class="row"><i class="sw l-fp"></i><span class="eye"><svg><use href="#eye"/></svg></span><span>F.Paste</span></div>
            <div class="row"><i class="sw l-bp"></i><span class="eye"><svg><use href="#eye"/></svg></span><span>B.Paste</span></div>
            <div class="row"><i class="sw l-fs"></i><span class="eye"><svg><use href="#eye"/></svg></span><span>F.Silkscreen</span></div>
            <div class="row"><i class="sw l-bs"></i><span class="eye"><svg><use href="#eye"/></svg></span><span>B.Silkscreen</span></div>
            <div class="row"><i class="sw l-fm"></i><span class="eye"><svg><use href="#eye"/></svg></span><span>F.Mask</span></div>
            <div class="row"><i class="sw l-bm"></i><span class="eye"><svg><use href="#eye"/></svg></span><span>B.Mask</span></div>
            <div class="row"><i class="sw l-gr"></i><span class="eye"><svg><use href="#eye"/></svg></span><span>User.Drawings</span></div>
            <div class="row"><i class="sw l-bl"></i><span class="eye"><svg><use href="#eye"/></svg></span><span>User.Comments</span></div>
            <div class="row"><i class="sw l-mi"></i><span class="eye"><svg><use href="#eye"/></svg></span><span>User.Eco1</span></div>
            <div class="row"><i class="sw l-ye"></i><span class="eye"><svg><use href="#eye"/></svg></span><span>User.Eco2</span></div>
            <div class="row"><i class="sw l-ed"></i><span class="eye"><svg><use href="#eye"/></svg></span><span>Edge.Cuts</span></div>
            <div class="row"><i class="sw l-ma"></i><span class="eye"><svg><use href="#eye"/></svg></span><span>Margin</span></div>
            <div class="row"><i class="sw l-ma"></i><span class="eye"><svg><use href="#eye"/></svg></span><span>F.Courtyard</span></div>
            <div class="row"><i class="sw l-cy"></i><span class="eye"><svg><use href="#eye"/></svg></span><span>B.Courtyard</span></div>
            <div class="row"><i class="sw l-ff"></i><span class="eye"><svg><use href="#eyeoff"/></svg></span><span>F.Fab</span></div>
            <div class="row"><i class="sw l-bf"></i><span class="eye"><svg><use href="#eye"/></svg></span><span>B.Fab</span></div>
            <div class="row"><i class="sw l-gr"></i><span class="eye"><svg><use href="#eye"/></svg></span><span>User.1</span></div>
            <div class="row"><i class="sw l-bl"></i><span class="eye"><svg><use href="#eye"/></svg></span><span>User.2</span></div>
            <div class="row"><i class="sw l-mi"></i><span class="eye"><svg><use href="#eye"/></svg></span><span>User.3</span></div>
            <div class="row"><i class="sw l-ye"></i><span class="eye"><svg><use href="#eye"/></svg></span><span>User.4</span></div>
            <div class="row"><i class="sw l-gr"></i><span class="eye"><svg><use href="#eye"/></svg></span><span>User.5</span></div>
            <div class="row"><i class="sw l-bl"></i><span class="eye"><svg><use href="#eye"/></svg></span><span>User.6</span></div>
            <div class="row"><i class="sw l-mi"></i><span class="eye"><svg><use href="#eye"/></svg></span><span>User.7</span></div>
            <div class="row"><i class="sw l-ye"></i></div>
          </div>
          <div class="ldo"><i class="tri-r"></i>Layer Display Options</div>
        </div>
        <label class="flabel">Presets (Ctrl+Tab):</label>
        <div class="combo wide"><span>---</span><svg class="cv"><use href="#chev"/></svg></div>
        <label class="flabel l2">Viewports (Shift+Tab):</label>
        <div class="combo wide"><span>---</span><svg class="cv"><use href="#chev"/></svg></div>
        <div class="dockhead sf">Selection Filter</div>
        <div class="filters">
          <div class="cb"><i class="box"><svg><use href="#chk"/></svg></i>All items</div>
          <div class="cb"><i class="box off"></i>Locked items</div>
          <div class="cb"><i class="box"><svg><use href="#chk"/></svg></i>Footprints</div>
          <div class="cb"><i class="box"><svg><use href="#chk"/></svg></i>Text</div>
          <div class="cb"><i class="box"><svg><use href="#chk"/></svg></i>Tracks</div>
          <div class="cb"><i class="box"><svg><use href="#chk"/></svg></i>Vias</div>
          <div class="cb"><i class="box"><svg><use href="#chk"/></svg></i>Pads</div>
          <div class="cb"><i class="box"><svg><use href="#chk"/></svg></i>Graphics</div>
          <div class="cb"><i class="box"><svg><use href="#chk"/></svg></i>Zones</div>
          <div class="cb"><i class="box"><svg><use href="#chk"/></svg></i>Rule Areas</div>
          <div class="cb"><i class="box"><svg><use href="#chk"/></svg></i>Dimensions</div>
          <div class="cb"><i class="box"><svg><use href="#chk"/></svg></i>Other items</div>
        </div>
      </aside>
    </div>

    <div class="statusbar"><span class="s1">Z 3,16</span><span class="s2">X 64,0000&nbsp; Y 150,5000</span><span class="s3">dx 64,0000&nbsp; dy 150,5000&nbsp; dist 163,5428</span><span class="s4">grid 0,5000</span><span class="s5">mm</span></div>
  </div>
</div>
</body>
</html>
```

FILE: styles.css
```css
* { box-sizing: border-box; }
html, body { margin: 0; padding: 0; }
body {
  width: 1920px; height: 1080px; overflow: hidden; background: #111;
  font-family: "Noto Sans", "Open Sans", sans-serif; font-size: 14px; color: #dfdfdf;
  display: flex; flex-direction: column;
}
i { font-style: normal; display: block; }
svg { display: block; }
.defs { position: absolute; }

/* top bar */
.topbar { height: 32px; flex: none; display: flex; align-items: center; background: #111; }
.top-left { flex: 1; display: flex; align-items: center; padding-left: 15px; gap: 6px; }
.pill { width: 29px; height: 8px; border-radius: 4px; background: #eee; }
.pilldot { width: 6px; height: 6px; border-radius: 3px; background: #8a8a8a; }
.clock { display: flex; align-items: center; gap: 17px; margin-left: 92px; font-size: 14px; color: #e2e2e2; }
.bell { width: 15px; height: 16px; }
.top-right { flex: 1; display: flex; align-items: center; justify-content: flex-end; padding-right: 16px; }
.tray { width: 16px; height: 16px; margin-left: 12px; }
.shield { margin-right: 30px; }
.en { width: auto; height: auto; margin: 0 20px 0 0; font-size: 14px; color: #e4e4e4; }

.main { flex: 1; min-height: 0; display: flex; }

/* dock */
.dock { width: 58px; flex: none; background: #111; padding-top: 4px; position: relative; overflow: hidden; }
.dk { height: 56px; display: flex; align-items: center; justify-content: center; position: relative; }
.dk > svg { width: 40px; height: 40px; }
.dk.run::before, .dk.run2::before, .dk.run2::after {
  content: ""; position: absolute; left: 3px; width: 4px; height: 4px; border-radius: 2px; background: #2c7f85;
}
.dk.run::before { top: 26px; }
.dk.run2::before { top: 23px; }
.dk.run2::after { top: 30px; }
.dk.active { margin-top: 1px; margin-bottom: 1px; }
.dk.active::after { content: ""; position: absolute; left: 3px; right: 3px; top: 2px; bottom: 3px; background: #3a3a3a; border-radius: 9px; z-index: 0; }
.dk.active > svg { position: relative; z-index: 1; }
.dk.active::before { z-index: 2; }
.dsep { height: 1px; margin: 1px 9px 0; background: #555; }
.ubuntu { position: absolute; left: 3px; bottom: 6px; width: 52px; height: 52px; border-radius: 11px; background: #4c4c4c; display: flex; align-items: center; justify-content: center; }
.ubuntu svg { width: 40px; height: 40px; }
.ki { font: 800 30px "Liberation Sans", sans-serif; fill: #f2f2f2; text-anchor: middle; letter-spacing: -1px; }
.qm { font: 700 29px "Noto Sans", sans-serif; fill: #fff; text-anchor: middle; }
.tm { font: 12px "DejaVu Sans Mono", monospace; fill: #eee; }
.sw-t { font: 700 25px "DejaVu Sans Mono", monospace; fill: #4a48dd; text-anchor: middle; letter-spacing: -2px; }

/* window */
.window { flex: 1; min-width: 0; display: flex; flex-direction: column; background: #383838; }
.titlebar { height: 37px; flex: none; background: #252525; border-bottom: 1px solid #0c0c0c; display: flex; align-items: center; justify-content: center; position: relative; padding-bottom: 2px; }
.title { font-size: 14px; font-weight: 700; color: #f0f0f0; }
.winbtns { position: absolute; right: 8px; top: 6.500px; display: flex; gap: 12px; }
.wb { width: 22px; height: 22px; border-radius: 11px; background: #383838; display: flex; align-items: center; justify-content: center; }
.wb svg { width: 12px; height: 12px; }

.menubar { height: 25px; flex: none; background: #303030; display: flex; align-items: center; padding-left: 9px; gap: 17.500px; font-size: 14px; color: #e4e4e4; }

.toolbar { height: 36px; flex: none; background: #383838; display: flex; align-items: center; padding: 0 0 2px 4px; }
.tb { width: 32.200px; height: 32px; display: flex; align-items: center; justify-content: center; flex: none; }
.ic { width: 24px; height: 24px; }
.sep { width: 8.350px; height: 24px; flex: none; position: relative; }
.sep::after { content: ""; position: absolute; left: 3.500px; top: 0; bottom: 0; width: 1px; background: #555; }
.ictxt { font: 700 11px "Noto Sans", sans-serif; fill: #ded3dd; text-anchor: middle; }
.nettxt { font: 700 8px "Noto Sans", sans-serif; fill: #fff; text-anchor: middle; }
.prompt { font: 700 11px "DejaVu Sans Mono", monospace; fill: #eee; }
.fb { font: 700 8px "DejaVu Sans Mono", monospace; fill: #111; text-anchor: middle; }
.ref { font: 700 10px "Noto Sans", sans-serif; fill: #e8f4ec; text-anchor: middle; }
.pp { font: 700 9px "DejaVu Sans Mono", monospace; fill: #dfe; text-anchor: middle; }
.t301 { font: 700 6.500px "DejaVu Sans Mono", monospace; fill: #222; text-anchor: middle; }

.auxbar { height: 37px; flex: none; background: #383838; display: flex; align-items: center; padding: 0 0 4px 5px; }
.combo { height: 34px; flex: none; background: #363636; border: 1px solid #222; border-radius: 7px; display: flex; align-items: center; justify-content: space-between; padding: 0 11px; font-size: 14px; color: #dedede; }
.cv { width: 12px; height: 8px; flex: none; }
.c-track { width: 203px; }
.c-via { width: 196px; margin-left: 0; }
.c-layer { width: 168px; padding-left: 9px; }
.c-grid { width: 262.500px; }
.c-zoom { width: 126px; }
.toggle { width: 30px; height: 30px; margin-left: 2px; border: 1px solid #2f8080; background: #16302f; display: flex; align-items: center; justify-content: center; flex: none; }
.asep { width: 1px; height: 22px; margin: 0 5.500px; background: #555; flex: none; }
.layerval { display: flex; align-items: center; gap: 3px; }
.lsw { width: 14px; height: 14px; background: #a81c1c; border: 1px solid #111; }
.pair { width: 24px; height: 32px; margin-left: 6px; flex: none; display: flex; align-items: center; }
.pair svg { width: 24px; height: 32px; }

.workspace { flex: 1; min-height: 0; display: flex; }
.centre { flex: 1; min-width: 0; display: flex; flex-direction: column; }
.editrow { flex: 1; min-height: 0; display: flex; }
.vtools { width: 35px; flex: none; background: #383838; display: flex; flex-direction: column; align-items: center; padding: 3px 1px 0 0; overflow: hidden; }
.vtools.rt { width: 39px; padding-right: 5px; }
.vb { width: 30px; height: 30px; margin: 1px 0; display: flex; align-items: center; justify-content: center; flex: none; position: relative; }
.vb.on { border: 1px solid #2f8080; background: #16302f; }
.vs { width: 22px; height: 1px; margin: 4.100px 0; background: #555; flex: none; }
.tri { width: 24px; height: 24px; }
.vb:has(.tri)::after { content: ""; position: absolute; right: 0; bottom: 0; border-style: solid; border-width: 0 0 7px 7px; border-color: transparent transparent #fff transparent; }
.canvas { flex: none; width: 1357px; height: 857px; shape-rendering: crispEdges; }
.polar { font: 11px "Noto Sans", sans-serif; fill: #ded3dd; }
.polar.it { font-style: italic; }
.unit { font: 13px "Noto Sans", sans-serif; fill: #ded3dd; text-anchor: middle; }
.unit.u-mm { font-size: 12px; }

.silk text { font: 17px "DejaVu Sans Mono", monospace; fill: #f2eda1; text-anchor: middle; }
.silk.small text { font: 700 10px "DejaVu Sans Mono", monospace; }
.padnum text { font: 13px "DejaVu Sans Mono", monospace; fill: #f4e6e6; text-anchor: middle; }

.msgpanel { height: 34px; flex: none; background: #383838; position: relative; display: flex; padding-left: 14.500px; font-size: 14px; line-height: 17px; color: #dcdcdc; }
.col { display: flex; flex-direction: column; }
.c1 { width: 63.500px; }
.c2 { width: 60.600px; }
.c3 { width: 136.200px; }
.c4 { width: 61.600px; }

.panel { width: 431px; flex: none; background: #383838; display: flex; flex-direction: column; }
.dockhead { height: 17px; margin-top: -1px; background: #2c2c2c; font-size: 11px; line-height: 14px; padding-left: 3px; color: #e2e2e2; flex: none; }
.notebook { height: 552px; margin-top: 5px; flex: none; border: 1px solid #1e1e1e; border-right: 0; border-bottom: 0; display: flex; flex-direction: column; }
.tabs { height: 37px; flex: none; display: flex; align-items: center; position: relative; border-bottom: 1px solid #1e1e1e; font-size: 14px; padding: 0 0 2px 20px; }
.tab { color: #dfdfdf; }
.t2 { margin-left: 33px; }
.t3 { margin-left: 33px; }
.tab.cur::after { content: ""; position: absolute; left: 8px; width: 66px; bottom: -1px; height: 3px; background: #2e7d74; }
.layers { height: 489px; flex: none; overflow: hidden; background: #4a4a4a; }
.row { height: 18px; display: flex; align-items: center; padding: 1px 0 0 18px; position: relative; font-size: 13px; color: #dcdcdc; }
.row.sel { background: #5c5c5c; }
.arrow { position: absolute; left: 6px; top: 3.500px; border-style: solid; border-width: 5.500px 0 5.500px 6px; border-color: transparent transparent transparent #4a4aff; }
.sw { width: 16px; height: 13px; flex: none; margin-right: 6px; }
.eye { width: 16px; height: 16px; border-radius: 8px; background: #3a3a3a; margin-right: 5px; flex: none; }
.eye svg { width: 16px; height: 16px; }
.l-cu { background: #a81c1c; }
.l-bcu { background: #4d7fc4; }
.l-fad { background: #840084; }
.l-bad { background: #000084; }
.l-fp { background: repeating-conic-gradient(#a89a8f 0 25%, #9c8d82 0 50%) 0 0 / 10.600px 8.700px; }
.l-bp { background: repeating-conic-gradient(#00aeaa 0 25%, #00a29e 0 50%) 0 0 / 10.600px 8.700px; }
.l-fs { background: #f2eda1; }
.l-bs { background: #e8b2a7; }
.l-fm { background: repeating-conic-gradient(#5e3473 0 25%, #4f2d63 0 50%) 0 0 / 10.600px 8.700px; }
.l-bm { background: repeating-conic-gradient(#0f7a6c 0 25%, #0b5f56 0 50%) 0 0 / 10.600px 8.700px; }
.l-gr { background: #c2c2c2; }
.l-bl { background: #5a94e0; }
.l-mi { background: #b4dbd2; }
.l-ye { background: #d8c852; }
.l-ed { background: #d0d2cd; }
.l-ma { background: #ff26e2; }
.l-cy { background: #26e9ff; }
.l-ff { background: #afafaf; }
.l-bf { background: #58597f; }
.ldo { height: 25px; flex: none; background: #262626; display: flex; align-items: center; padding: 2px 0 0 13px; gap: 2px; font-size: 13px; letter-spacing: -.15px; color: #dcdcdc; }
.tri-r { border-style: solid; border-width: 5px 0 5px 5px; border-color: transparent transparent transparent #fff; }
.flabel { display: block; height: 20px; margin: 10px 0 0 7.500px; font-size: 13px; line-height: 19px; color: #dcdcdc; flex: none; }
.flabel.l2 { margin-top: 3px; }
.combo.wide { width: 416px; height: 33px; margin-left: 7.500px; padding: 0 12px; font-size: 13px; }
.dockhead.sf { margin-top: 12px; height: 17px; }
.filters { display: grid; grid-template-columns: 108px auto; grid-auto-rows: 21px; padding: 5px 0 0 9px; justify-content: start; font-size: 13px; color: #dcdcdc; }
.cb { display: flex; align-items: center; gap: 4px; }
.box { width: 16px; height: 16px; border-radius: 3px; background: #2e8078; flex: none; }
.box svg { width: 16px; height: 16px; }
.box.off { background: #333; border: 1px solid #1e1e1e; }

.statusbar { height: 22px; flex: none; background: #2d2d2d; display: flex; align-items: center; font-size: 14px; color: #dcdcdc; position: relative; padding-left: 631.500px; }
.statusbar span { flex: none; }
.s1 { width: 85px; }
.s2 { width: 191px; }
.s3 { width: 308px; }
.s4 { width: 221px; }
```
